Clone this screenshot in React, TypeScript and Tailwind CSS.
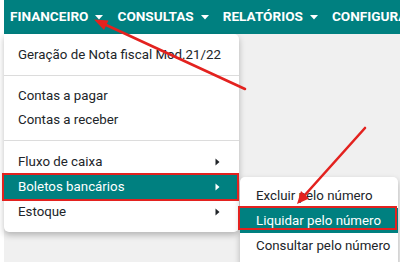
import React from "react";

const DownCaret = () => (
  <svg width="8" height="5" viewBox="0 0 8 5" className="shrink-0">
    <path d="M0 0h8L4 4.5z" fill="white" />
  </svg>
);

const RightCaret = ({ color }: { color: string }) => (
  <svg width="5" height="8" viewBox="0 0 5 8" className="shrink-0">
    <path d="M0.5 0.5L4.5 4 0.5 7.5z" fill={color} />
  </svg>
);

const NavItem = ({ label, caret = true }: { label: string; caret?: boolean }) => (
  <div className="flex items-center gap-[7px] shrink-0">
    <span className="text-white font-bold text-[13.6px] leading-none">{label}</span>
    {caret && <DownCaret />}
  </div>
);

export default function App() {
  return (
    <div className="relative w-[400px] h-[262px] overflow-hidden bg-white font-['Roboto',sans-serif] text-[#212529]">
      <div className="ml-[4px] h-full flex flex-col">
        <header className="h-[34px] bg-[#008080] flex items-center pl-[6px] gap-[14px] whitespace-nowrap overflow-hidden">
          <NavItem label="FINANCEIRO" />
          <NavItem label="CONSULTAS" />
          <NavItem label="RELATÓRIOS" />
          <NavItem label="CONFIGURAÇÕES" caret={false} />
        </header>
        <main className="flex-1 bg-[#f0f0f0]" />
      </div>

      {/* Main dropdown */}
      <div className="absolute left-[4px] top-[34px] w-[235px] bg-white rounded-b-[5px] rounded-tr-[5px] shadow-[0_3px_6px_rgba(0,0,0,0.25)] pt-[9px] pb-[8px] text-[13.3px] whitespace-nowrap">
        <div className="h-[24px] flex items-center px-[14px]">Geração de Nota fiscal Mod.21/22</div>
        <div className="my-[8px] h-px bg-[#dcdcdc]" />
        <div className="h-[24px] flex items-center px-[14px]">Contas a pagar</div>
        <div className="h-[24px] flex items-center px-[14px]">Contas a receber</div>
        <div className="my-[8px] h-px bg-[#dcdcdc]" />
        <div className="h-[25px] flex items-center justify-between pl-[14px] pr-[19px]">
          <span>Fluxo de caixa</span>
          <RightCaret color="#212529" />
        </div>
        <div className="h-[25px] flex items-center justify-between pl-[14px] pr-[19px] bg-[#008080] text-white">
          <span>Boletos bancários</span>
          <RightCaret color="white" />
        </div>
        <div className="h-[25px] flex items-center justify-between pl-[14px] pr-[19px]">
          <span>Estoque</span>
          <RightCaret color="#212529" />
        </div>
      </div>

      {/* Submenu */}
      <div className="absolute left-[240px] top-[177px] w-[158px] bg-white rounded-[5px] shadow-[0_3px_6px_rgba(0,0,0,0.25)] pt-[6px] pb-[8px] text-[13.3px] whitespace-nowrap">
        <div className="h-[25px] flex items-center px-[16px]">Excluir pelo número</div>
        <div className="h-[25px] flex items-center px-[16px] bg-[#008080] text-white">Liquidar pelo número</div>
        <div className="h-[25px] flex items-center px-[16px]">Consultar pelo número</div>
      </div>

      {/* Annotation boxes */}
      <div className="absolute left-[2px] top-[173px] w-[237px] h-[28px] border-[2.5px] border-[#e3221f]" />
      <div className="absolute left-[238px] top-[206px] w-[159px] h-[24px] border-[2.5px] border-[#e3221f]" />

      {/* Annotation arrows */}
      <svg className="absolute inset-0 pointer-events-none" width="400" height="262" viewBox="0 0 400 262">
        <line x1="245" y1="89" x2="104" y2="24" stroke="#e3221f" strokeWidth="2.6" strokeLinecap="round" />
        <polygon points="94,19.5 108.5,20.5 104,30" fill="#e3221f" />
        <line x1="365" y1="128" x2="304" y2="196" stroke="#e3221f" strokeWidth="2.6" strokeLinecap="round" />
        <polygon points="297,204 309,198.5 301,191" fill="#e3221f" />
      </svg>
    </div>
  );
}
